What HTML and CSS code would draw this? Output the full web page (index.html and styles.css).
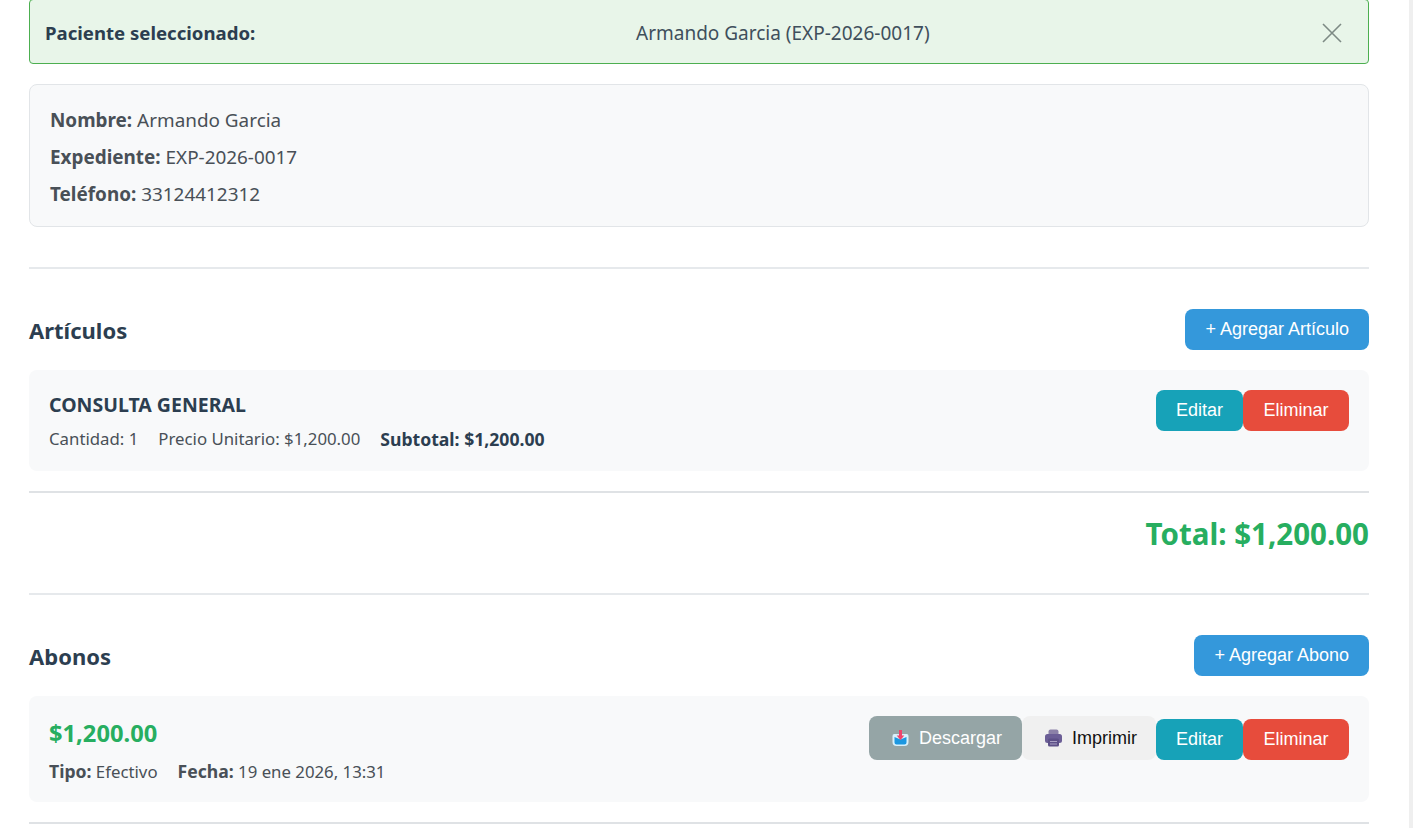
FILE: index.html
```html
<!DOCTYPE html>
<html lang="es">
<head>
<meta charset="utf-8">
<title>Paciente</title>
<link rel="stylesheet" href="styles.css">
</head>
<body>
<div class="scrolltrack"></div>
<main class="page">
  <div class="alert">
    <strong class="alert-label">Paciente seleccionado:</strong>
    <span class="alert-value">Armando Garcia (EXP-2026-0017)</span>
    <button class="close" aria-label="Cerrar">
      <svg width="20" height="20" viewBox="0 0 20 20"><path d="M1 1L19 19M19 1L1 19" stroke="#7d8a85" stroke-width="1.6" fill="none"/></svg>
    </button>
  </div>
  <section class="info">
    <p><strong>Nombre:</strong> Armando Garcia</p>
    <p><strong>Expediente:</strong> EXP-2026-0017</p>
    <p><strong>Teléfono:</strong> 33124412312</p>
  </section>
  <hr class="rule rule-first">
  <div class="section-head">
    <h3>Artículos</h3>
    <button class="btn btn-blue">+ Agregar Artículo</button>
  </div>
  <div class="item item-art">
    <div>
      <div class="item-title">CONSULTA GENERAL</div>
      <div class="meta meta-dark"><span>Cantidad: 1</span><span>Precio Unitario: $1,200.00</span><strong>Subtotal: $1,200.00</strong></div>
    </div>
    <div class="actions">
      <button class="btn btn-teal">Editar</button>
      <button class="btn btn-red">Eliminar</button>
    </div>
  </div>
  <hr class="rule rule-thick">
  <div class="total">Total: $1,200.00</div>
  <hr class="rule rule-total">
  <div class="section-head">
    <h3>Abonos</h3>
    <button class="btn btn-blue">+ Agregar Abono</button>
  </div>
  <div class="item item-abono">
    <div>
      <div class="amount">$1,200.00</div>
      <div class="meta meta-abono"><span><strong>Tipo:</strong> Efectivo</span><span><strong>Fecha:</strong> 19 ene 2026, 13:31</span></div>
    </div>
    <div class="actions">
      <button class="btn btn-tall btn-gray">
        <svg class="ico" width="20" height="20" viewBox="-1.500 0 20 20"><path d="M3.800 6H16.200Q18 6 18 8V14Q18 18 14 18H6Q2 18 2 14V8Q2 6 3.800 6Z" fill="#d9f0fb"/><path d="M4 9L10 11.500L16 9V14.500Q16 16.500 14 16.500H6Q4 16.500 4 14.500Z" fill="#1c97e0"/><path d="M8.500 2H11.500V7.500H13.800L10 12L6.200 7.500H8.500Z" fill="#f0436b"/></svg>
        <span>Descargar</span>
      </button>
      <button class="btn btn-tall btn-light">
        <svg class="ico" width="19" height="20" viewBox="-1 0 19 20"><rect x="4.500" y="1.500" width="10" height="6" rx="2" fill="#8b81a8"/><rect x="1" y="6" width="17" height="9" rx="2.500" fill="#6b5e96"/><rect x="4" y="10.500" width="11" height="8" rx="1.500" fill="#5d5088"/><rect x="6" y="13" width="7" height="1" fill="#a9a0c4"/><rect x="6" y="15.500" width="7" height="1" fill="#a9a0c4"/></svg>
        <span>Imprimir</span>
      </button>
      <button class="btn btn-teal">Editar</button>
      <button class="btn btn-red">Eliminar</button>
    </div>
  </div>
  <hr class="rule rule-thick">
</main>
</body>
</html>
```
FILE: styles.css
```css
* { box-sizing: border-box; }
html, body { margin: 0; height: 100%; overflow: hidden; background: #fff; }
body { font-family: "Noto Sans", "Open Sans", sans-serif; color: #2c3e50; }
.scrolltrack { position: fixed; top: 0; right: 0; bottom: 0; width: 4px; background: #efefef; }
.page { padding: 0 44px 0 29px; }
.alert {
  margin-top: -1px; height: 65px; padding: 2px 16px 0 15px;
  display: flex; align-items: center;
  background: #e8f5e9; border: 1px solid #4caf50; border-radius: 4px;
  font-size: 19px;
}
.alert-label { font-size: 18.6px; font-weight: 700; width: 591px; }
.alert-value { flex: 1; color: #3f4f5c; }
.close { border: 0; background: none; padding: 0 10px 0 0; display: flex; }
.info {
  margin-top: 20px; height: 143px; padding: 23px 20px;
  background: #f8f9fa; border: 1px solid #e2e5e8; border-radius: 8px;
  font-size: 18.9px; color: #495057;
}
.info p { margin: 0 0 12px; line-height: 25px; }
.rule { border: 0; height: 2px; background: #e6e9ec; margin: 0; }
.rule-first { margin: 40px 0; }
.rule-thick { margin-top: 20px; background: #dfe2e5; }
.rule-total { margin-bottom: 40px; }
.section-head { display: flex; justify-content: space-between; align-items: center; margin-bottom: 20px; }
h3 { margin: 1px 0 0; font-size: 22px; font-weight: 700; color: #2c3e50; }
.btn {
  height: 41px; padding: 0 20px; border: 0; border-radius: 8px;
  font: 18px "Liberation Sans", Arial, sans-serif; color: #fff;
  display: inline-flex; align-items: center; justify-content: center;
}
.btn-blue { background: #3498db; }
.btn-teal { background: #17a2b8; }
.btn-red { background: #e74c3c; padding: 0 20.5px; }
.btn-tall { height: 44px; }
.btn-gray { background: #95a5a6; }
.btn-light { background: #f0f0f0; color: #111; padding: 0 19px 0 21px; }
.ico { margin-right: 10px; }
.item {
  display: flex; justify-content: space-between; align-items: flex-start;
  background: #f8f9fa; border-radius: 8px; padding: 20px;
}
.item-art { height: 101px; }
.item-abono { height: 106px; }
.actions { display: flex; align-items: flex-end; }
.item-title { font-size: 19.5px; font-weight: 700; line-height: 30px; }
.meta { display: flex; gap: 20px; margin-top: 8px; font-size: 16.8px; line-height: 22px; color: #495057; }
.meta-abono { margin-top: 10px; }
.meta strong { font-size: 17.6px; }
.meta-dark strong { color: #2c3e50; }
.total { height: 100px; padding-top: 22px; text-align: right; font-size: 29.5px; font-weight: 700; color: #27ae60; line-height: 38px; }
.amount { font-size: 23.7px; font-weight: 700; color: #27ae60; line-height: 34px; }
```
